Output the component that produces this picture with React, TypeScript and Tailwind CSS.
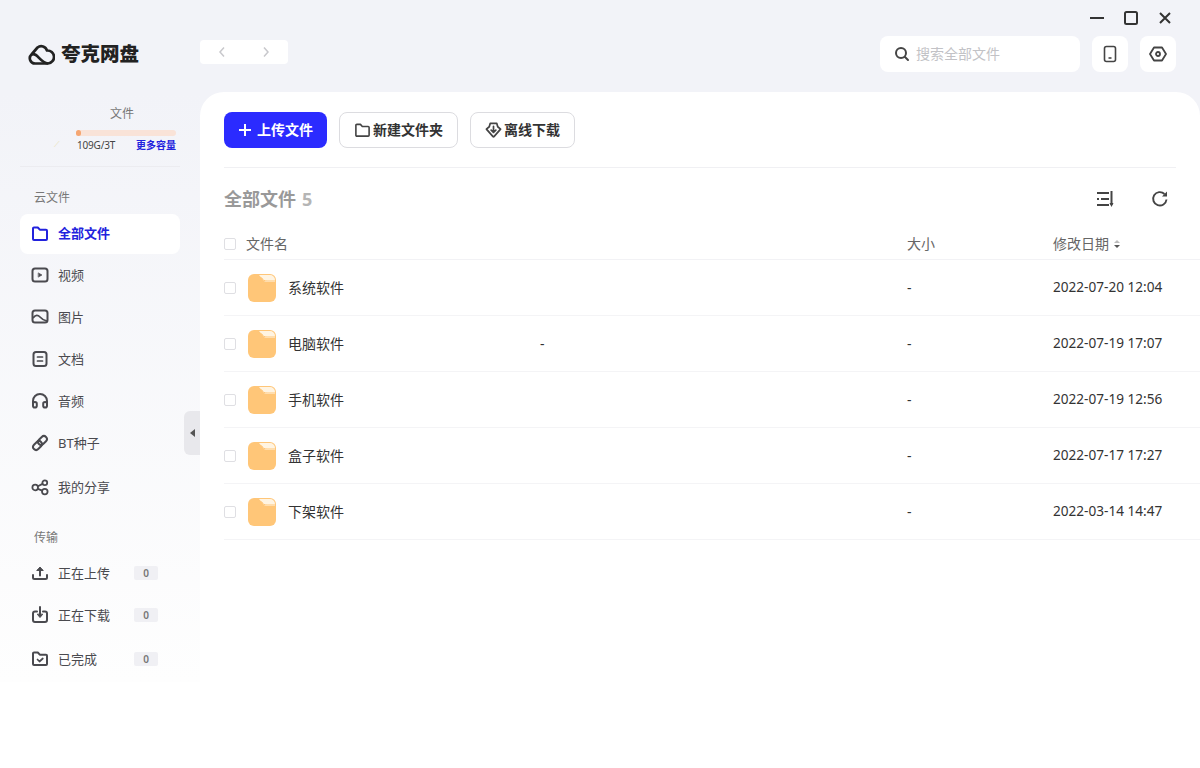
import React from "react";

const font = { fontFamily: '"Noto Sans", "Noto Sans CJK SC", sans-serif' };

type IconProps = { className?: string };
const S = ({ children, className, size = 18 }: { children: React.ReactNode; className?: string; size?: number }) => (
  <svg width={size} height={size} viewBox="0 0 18 18" fill="none" stroke="currentColor" strokeWidth="2" strokeLinecap="round" strokeLinejoin="round" className={className}>
    {children}
  </svg>
);

const FolderI = ({ className }: IconProps) => (
  <S className={className}><path d="M2 3.500a1 1 0 0 1 1-1h3.800l2 2.200H15a1 1 0 0 1 1 1V14a1 1 0 0 1-1 1H3a1 1 0 0 1-1-1z" /></S>
);
const VideoI = ({ className }: IconProps) => (
  <S className={className}><rect x="1.500" y="2.500" width="15" height="13" rx="2.500" /><path d="M7.500 7l3.500 2-3.500 2z" fill="currentColor" strokeWidth="0.6" /></S>
);
const ImageI = ({ className }: IconProps) => (
  <S className={className}><rect x="1.500" y="2.500" width="15" height="12" rx="2.500" /><path d="M2.500 9.500c2-2.800 4.400-2.800 6.500-.5 2 2.200 4 3.400 6.500 3.800" strokeWidth="1.800" /></S>
);
const DocI = ({ className }: IconProps) => (
  <S className={className}><rect x="2.500" y="2" width="13" height="14" rx="2.500" /><path d="M6.500 7h5M6.500 11h5" strokeWidth="1.700" /></S>
);
const HeadI = ({ className }: IconProps) => (
  <S className={className}><path d="M2 12V9a7 7 0 0 1 14 0v3" /><rect x="2" y="10" width="3.800" height="5.500" rx="1.800" /><rect x="12.200" y="10" width="3.800" height="5.500" rx="1.800" /></S>
);
const LinkI = ({ className }: IconProps) => (
  <S className={className}><g transform="rotate(-45 9 9)"><rect x="0.500" y="6" width="10" height="6" rx="3" /><rect x="7.500" y="6" width="10" height="6" rx="3" /></g></S>
);
const ShareI = ({ className }: IconProps) => (
  <S className={className}><circle cx="4.200" cy="9.500" r="2.800" strokeWidth="1.800" /><circle cx="13.800" cy="4.800" r="2.400" strokeWidth="1.800" /><circle cx="13.800" cy="13.600" r="2.800" strokeWidth="1.800" /><path d="M6.900 8.200l4.600-2.300M6.900 10.800l4.300 1.800" strokeWidth="1.800" /></S>
);
const UploadI = ({ className }: IconProps) => (
  <S className={className}><path d="M2 11v2.500A1.500 1.500 0 0 0 3.500 15h11a1.500 1.500 0 0 0 1.500-1.500V11" /><path d="M9 11.500V4" /><path d="M6 6.200L9 3.200l3 3z" fill="currentColor" strokeWidth="1" /></S>
);
const DownloadI = ({ className }: IconProps) => (
  <S className={className}><path d="M6 5.500H4a2 2 0 0 0-2 2V14a2 2 0 0 0 2 2h10a2 2 0 0 0 2-2V7.500a2 2 0 0 0-2-2h-2" /><path d="M9 1V9" /><path d="M6.500 8.500L9 11.500l2.500-3z" fill="currentColor" strokeWidth="1" /></S>
);
const DoneI = ({ className }: IconProps) => (
  <S className={className}><path d="M2 3.500a1 1 0 0 1 1-1h3.800l2 2.200H15a1 1 0 0 1 1 1V14a1 1 0 0 1-1 1H3a1 1 0 0 1-1-1z" /><path d="M6.500 9.500l2 2 3.300-3" strokeWidth="1.700" /></S>
);

const FileFolder = () => (
  <svg width="28" height="28" viewBox="0 0 28 28" className="shrink-0">
    <rect x="0" y="0" width="28" height="28" rx="6" fill="#ffc678" />
    <path d="M11 1h11a5 5 0 0 1 5 5v2H19c-2 0-3.500-1-4.500-3z" fill="#fff4e2" />
    <path d="M13.500 3.500c1 2.500 3 3.500 5.500 3.500h9" fill="none" stroke="#ffc678" strokeWidth="1" />
  </svg>
);

const nav1 = [
  { t: "视频", I: VideoI, cls: "h-[42px]" },
  { t: "图片", I: ImageI, cls: "h-[42px]" },
  { t: "文档", I: DocI, cls: "h-[42px]" },
  { t: "音频", I: HeadI, cls: "h-[42px]" },
  { t: "BT种子", I: LinkI, cls: "h-[42px]" },
  { t: "我的分享", I: ShareI, cls: "h-[46px]" },
];
const nav2 = [
  { t: "正在上传", I: UploadI, cls: "h-[42px]" },
  { t: "正在下载", I: DownloadI, cls: "h-[42px]" },
  { t: "已完成", I: DoneI, cls: "h-[46px]" },
];
const rows = [
  { n: "系统软件", d: "2022-07-20 12:04" },
  { n: "电脑软件", d: "2022-07-19 17:07", dash: true },
  { n: "手机软件", d: "2022-07-19 12:56" },
  { n: "盒子软件", d: "2022-07-17 17:27" },
  { n: "下架软件", d: "2022-03-14 14:47" },
];

const Check = () => <span className="block w-3 h-3 shrink-0 rounded-[2px] border border-[#dfdfe3] bg-white" />;

export default function App() {
  return (
    <div style={font} className="w-[1200px] h-[768px] overflow-hidden bg-white flex flex-col text-[#333]">
      <div className="h-[92px] shrink-0 bg-[#f2f3f8] flex flex-col">
        <div className="h-[36px] flex items-center justify-end gap-[16px] pr-[26px]">
          <svg width="18" height="18" viewBox="0 0 18 18" fill="none" stroke="#333" strokeWidth="2"><path d="M2 9h14" /></svg>
          <svg width="18" height="18" viewBox="0 0 18 18" fill="none" stroke="#333" strokeWidth="2"><rect x="3" y="3" width="12" height="12" rx="1.500" /></svg>
          <svg width="18" height="18" viewBox="0 0 18 18" fill="none" stroke="#333" strokeWidth="2"><path d="M4 4l10 10M14 4L4 14" /></svg>
        </div>
        <div className="h-[36px] flex items-center pl-[28px] pr-[24px]">
          <div className="flex items-center w-[172px] gap-[6px]">
            <svg width="27" height="24" viewBox="0 0 27 24" fill="none" stroke="#222" strokeWidth="2.700" strokeLinejoin="round">
              <path d="M7 21.500a5.200 5.200 0 0 1-3.500-9L9.500 5.500a6 6 0 0 1 9.500 3 6.500 6.500 0 0 1 1 13z" />
              <path d="M3.500 12.500c6-2.500 8 8 16.500 9" />
            </svg>
            <span className="text-[19.500px] font-black text-[#222] leading-none">夸克网盘</span>
          </div>
          <div className="w-[88px] h-[24px] -mt-[4px] bg-white rounded-[4px] flex items-center justify-center gap-[32px] text-[#c8c8cc]">
            <svg width="12" height="12" viewBox="0 0 12 12" fill="none" stroke="currentColor" strokeWidth="1.500"><path d="M8 1.500L4 6l4 4.500" /></svg>
            <svg width="12" height="12" viewBox="0 0 12 12" fill="none" stroke="currentColor" strokeWidth="1.500"><path d="M4 1.500L8 6l-4 4.500" /></svg>
          </div>
          <div className="ml-auto flex items-center gap-[12px]">
            <div className="w-[200px] h-[36px] bg-white rounded-[8px] flex items-center pl-[14px] gap-[6px]">
              <svg width="16" height="16" viewBox="0 0 16 16" fill="none" stroke="#444" strokeWidth="2" strokeLinecap="round"><circle cx="7" cy="7" r="5" /><path d="M11 11l3 3" /></svg>
              <span className="text-[14px] text-[#c2c2c6] -mt-[2px]">搜索全部文件</span>
            </div>
            <div className="w-[36px] h-[36px] bg-white rounded-[8px] flex items-center justify-center">
              <svg width="16" height="18" viewBox="0 0 16 18" fill="none" stroke="#444" strokeWidth="1.600"><rect x="2.500" y="1.500" width="11" height="15" rx="2" /><path d="M6.500 13h3" /></svg>
            </div>
            <div className="w-[36px] h-[36px] bg-white rounded-[8px] flex items-center justify-center">
              <svg width="18" height="18" viewBox="0 0 18 18" fill="none" stroke="#444" strokeWidth="1.800" strokeLinejoin="round"><path d="M5 2.500h8L17 9l-4 6.500H5L1 9z" /><circle cx="9" cy="9" r="2" /></svg>
            </div>
          </div>
        </div>
      </div>

      <div className="flex-1 flex min-h-0 bg-[#f2f3f8]">
        <div className="w-[200px] shrink-0 flex flex-col bg-white">
          <div className="h-[590px] shrink-0 bg-gradient-to-b from-[#f2f3f8] to-[#fefefe] px-[20px] flex flex-col">
            <div className="h-[75px] shrink-0 border-b border-[#ececf0] relative">
              <div className="text-[12px] leading-[14px] text-[#777] pl-[90px] pt-[15px]">文件</div>
              <div className="ml-[56px] mt-[9px] h-[6px] w-[100px] rounded-full bg-[#f9e3d8]">
                <div className="h-[6px] w-[5px] rounded-full bg-[#f5a672]" />
              </div>
              <div className="ml-[57px] mt-[2px] w-[99px] flex justify-between items-center text-[10px] leading-[14px]">
                <span className="text-[#444] tracking-[-0.2px]">109G/3T</span>
                <span className="text-[#2222dd] font-semibold">更多容量</span>
              </div>
              <span className="absolute left-[34px] top-[48px] text-[8px] leading-none text-[#e8e0b0]">⟋</span>
            </div>
            <div className="pl-[14px] h-[46px] shrink-0 pt-[23px] text-[12px] leading-[16px] text-[#777]">云文件</div>
            <div className="h-[40px] mt-[1px] bg-white rounded-[8px] flex items-center pl-[11px] gap-[9px] text-[#2222dd] shrink-0">
              <FolderI />
              <span className="text-[13px] font-semibold">全部文件</span>
            </div>
            <div className="flex flex-col shrink-0">
              {nav1.map(({ t, I, cls }) => (
                <div key={t} className={`${cls} shrink-0 flex items-center pl-[11px] gap-[9px] text-[#4a4a4f]`}>
                  <I />
                  <span className="text-[13px] mt-[2px]">{t}</span>
                </div>
              ))}
            </div>
            <div className="pl-[14px] h-[40px] shrink-0 pt-[20px] text-[12px] leading-[16px] text-[#777]">传输</div>
            <div className="flex flex-col mt-[2px] shrink-0">
              {nav2.map(({ t, I, cls }) => (
                <div key={t} className={`${cls} shrink-0 flex items-center pl-[11px] gap-[9px] text-[#4a4a4f]`}>
                  <I />
                  <span className="text-[13px] w-[67px] mt-[2px]">{t}</span>
                  <span className="w-[24px] h-[14px] rounded-[2px] bg-[#f0f0f4] text-[10px] leading-[14px] font-semibold text-[#777] text-center">0</span>
                </div>
              ))}
            </div>
          </div>
        </div>

        <div className="flex-1 min-w-0 bg-white rounded-t-[24px] relative pl-[24px]">
          <div className="absolute -left-[16px] top-[319px] w-[16px] h-[44px] rounded-l-[6px] bg-[#e8e8ec] flex items-center justify-center">
            <span className="block w-0 h-0 border-y-[4px] border-y-transparent border-r-[5px] border-r-[#555]" />
          </div>
          <div className="mr-[24px] pt-[20px] h-[76px] border-b border-[#f0f0f3] flex items-start gap-[12px]">
            <div className="w-[103px] h-[36px] rounded-[8px] bg-[#2b2bff] text-white flex items-center justify-center gap-[5px]">
              <svg width="14" height="14" viewBox="0 0 14 14" fill="none" stroke="#fff" strokeWidth="2"><path d="M7 1v12M1 7h12" /></svg>
              <span className="text-[14px] font-bold -mt-[2px]">上传文件</span>
            </div>
            <div className="w-[119px] h-[36px] rounded-[8px] border border-[#dcdce0] flex items-center justify-center gap-[2px] text-[#333]">
              <svg width="17" height="17" viewBox="0 0 18 18" fill="none" stroke="#444" strokeWidth="1.700" strokeLinejoin="round"><path d="M2 3.500a1 1 0 0 1 1-1h3.800l2 2.200H15a1 1 0 0 1 1 1V14a1 1 0 0 1-1 1H3a1 1 0 0 1-1-1z" /></svg>
              <span className="text-[14px] font-bold -mt-[2px]">新建文件夹</span>
            </div>
            <div className="w-[105px] h-[36px] rounded-[8px] border border-[#dcdce0] flex items-center justify-center gap-[2px] text-[#333]">
              <svg width="17" height="17" viewBox="0 0 18 18" fill="none" stroke="#444" strokeWidth="1.800" strokeLinejoin="round" strokeLinecap="round"><path d="M5.500 1.500h7l1 3.500 3 2.500L9.500 15.500a.7.7 0 0 1-1 0L1.500 7.500l3-2.500z" /><path d="M9 4.500v6.500M6.500 8.500L9 11l2.500-2.500" /></svg>
              <span className="text-[14px] font-bold -mt-[2px]">离线下载</span>
            </div>
          </div>
          <div className="mr-[24px] h-[61px] flex items-center">
            <span className="text-[18px] font-bold text-[#999] mt-[2px]">全部文件</span>
            <span className="text-[18px] font-bold text-[#b5b5b5] ml-[6px] mt-[2px]">5</span>
            <svg className="ml-auto" width="19" height="18" viewBox="0 0 19 18" fill="none" stroke="#444" strokeWidth="2"><path d="M1 3h12M1 9h2M5 9h8M1 15h12" /><path d="M15.500 1v14" /><path d="M13.500 13L15.500 17l2-4z" fill="#444" stroke="none" /></svg>
            <svg className="ml-[36px] mr-[7px]" width="18" height="18" viewBox="0 0 18 18" fill="none" stroke="#444" strokeWidth="1.900"><path d="M15.500 9.500A6.700 6.700 0 1 1 13.500 4" /><path d="M16 1.500v5h-5z" fill="#444" stroke="none" /></svg>
          </div>
          <div className="h-[31px] border-b border-[#f2f2f5] flex items-center text-[14px] text-[#666]">
            <Check />
            <span className="ml-[10px] w-[661px] -mt-[2px]">文件名</span>
            <span className="w-[146px] -mt-[2px]">大小</span>
            <span className="-mt-[2px]">修改日期</span>
            <svg className="ml-[4px]" width="8" height="10" viewBox="0 0 8 10"><path d="M4 1L7 4H1z" fill="#bbb" /><path d="M4 9L1 6h6z" fill="#555" /></svg>
          </div>
          {rows.map((r) => (
            <div key={r.n} className="h-[56px] border-b border-[#f4f4f6] flex items-center text-[14px] text-[#333] relative">
              <Check />
              <span className="ml-[12px]"><FileFolder /></span>
              <span className="ml-[12px] w-[619px]">{r.n}</span>
              <span className="w-[146px]">-</span>
              <span className="text-[13.600px]">{r.d}</span>
              {r.dash && <span className="absolute left-[316px] top-[17px]">-</span>}
            </div>
          ))}
        </div>
      </div>
    </div>
  );
}
